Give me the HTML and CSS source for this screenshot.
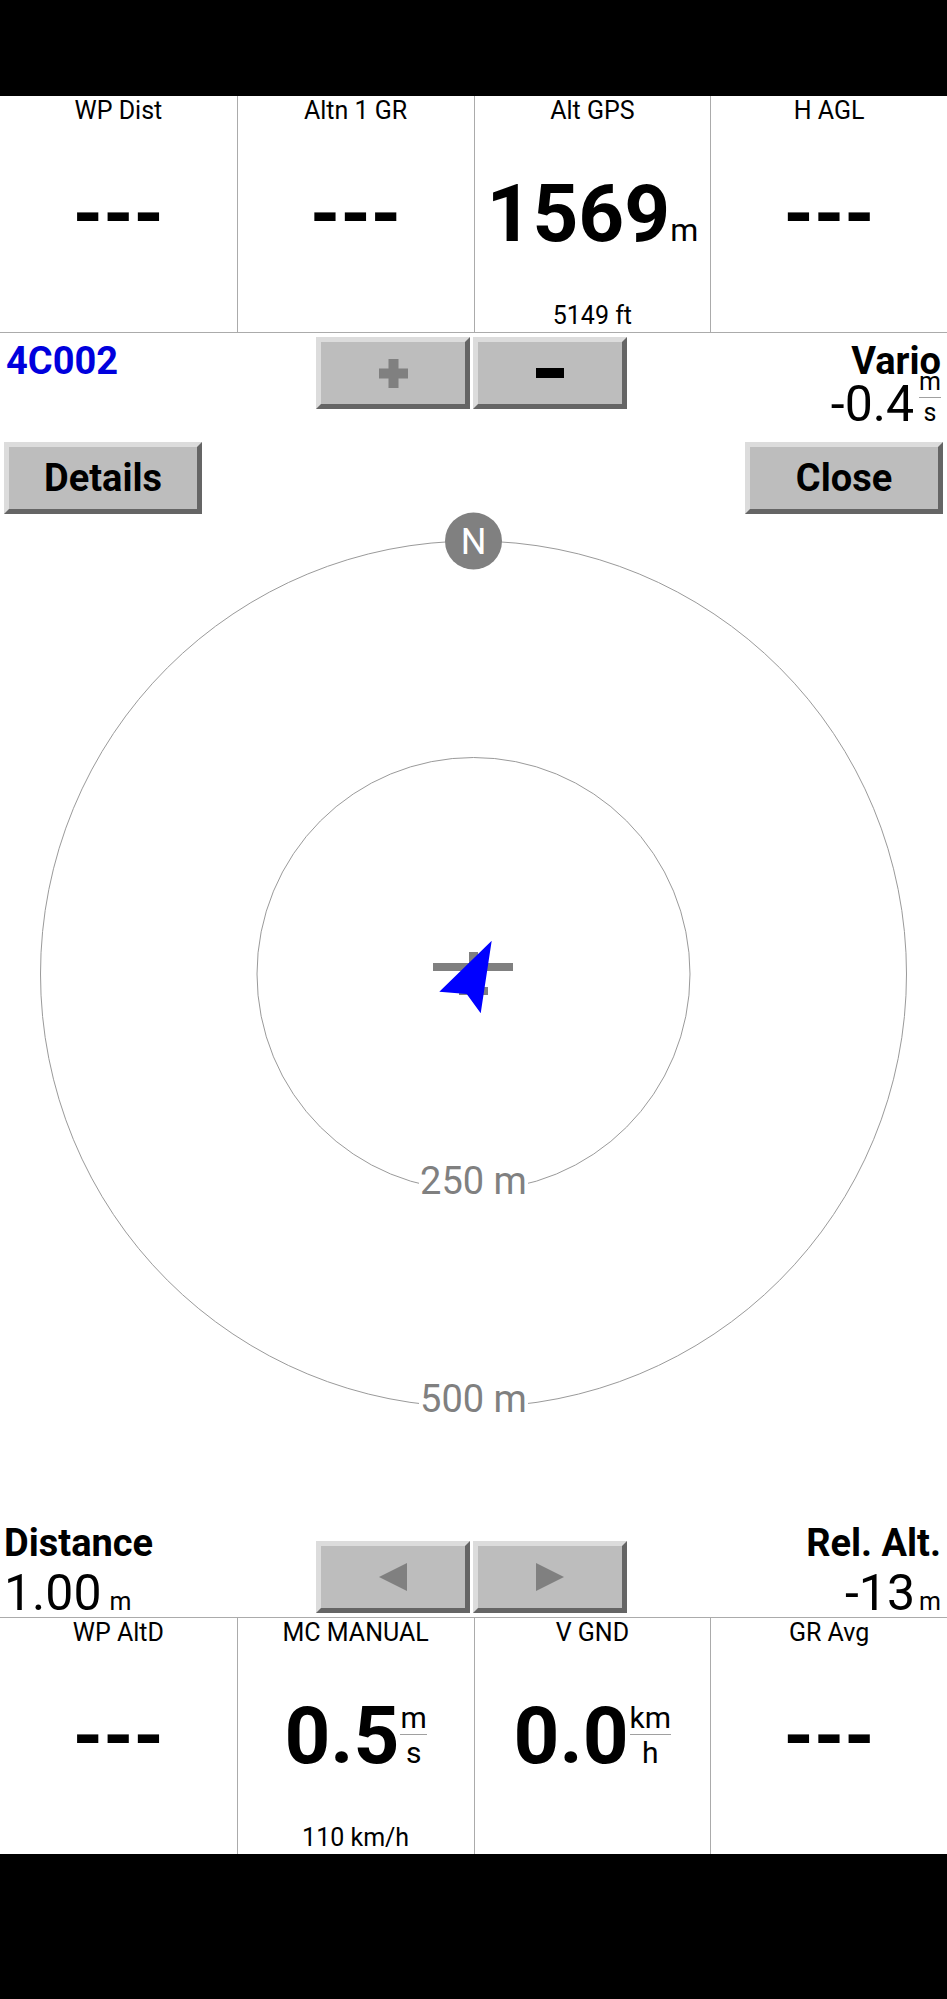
FILE: index.html
```html
<!DOCTYPE html>
<html lang="en">
<head>
<meta charset="utf-8">
<title>FLARM Traffic</title>
<link rel="stylesheet" href="styles.css">
</head>
<body>
<div class="screen">
  <div class="bar-top"></div>

  <div class="infobar upper">
    <div class="ibox">
      <div class="ib-title">WP Dist</div>
      <div class="ib-value"><div class="val"><span class="dash">---</span></div></div>
      <div class="ib-comment"></div>
    </div>
    <div class="ibox">
      <div class="ib-title">Altn 1 GR</div>
      <div class="ib-value"><div class="val"><span class="dash">---</span></div></div>
      <div class="ib-comment"></div>
    </div>
    <div class="ibox">
      <div class="ib-title">Alt GPS</div>
      <div class="ib-value"><div class="val">1569<span class="unit">m</span></div></div>
      <div class="ib-comment">5149 ft</div>
    </div>
    <div class="ibox">
      <div class="ib-title">H AGL</div>
      <div class="ib-value"><div class="val"><span class="dash">---</span></div></div>
      <div class="ib-comment"></div>
    </div>
  </div>

  <div class="radar">
    <svg class="radar-canvas" viewBox="0 0 947 1284" width="947" height="1284">
      <circle cx="473.5" cy="641" r="433" fill="none" stroke="#9a9a9a" stroke-width="1"/>
      <circle cx="473.5" cy="641" r="216.5" fill="none" stroke="#9a9a9a" stroke-width="1"/>
      <rect x="419" y="830" width="109" height="36" fill="#fff"/>
      <text x="473.5" y="861" text-anchor="middle" class="rlabel">250 m</text>
      <rect x="419" y="1048" width="109" height="36" fill="#fff"/>
      <text x="473.5" y="1079" text-anchor="middle" class="rlabel">500 m</text>
      <circle cx="473.5" cy="208" r="28.5" fill="#808080"/>
      <text x="473.5" y="221" text-anchor="middle" class="nlabel">N</text>
      <rect x="433" y="630" width="80" height="8" fill="#808080"/>
      <rect x="469" y="619" width="9" height="43" fill="#808080"/>
      <rect x="459" y="654" width="29" height="8" fill="#808080"/>
      <polygon points="491.7,607.7 439.3,658.7 466.7,661 480.7,680.3" fill="#0000ff"/>
    </svg>

    <div class="radar-top">
      <div class="row1">
        <div class="target">4C002</div>
        <div class="btn-pair">
          <div class="btn sq">
            <svg width="29" height="29" viewBox="0 0 29 29"><rect x="9.5" y="0" width="10" height="29" fill="#808080"/><rect x="0" y="9.5" width="29" height="10" fill="#808080"/></svg>
          </div>
          <div class="btn sq">
            <svg width="28" height="10" viewBox="0 0 28 10"><rect x="0" y="0" width="28" height="10" fill="#000"/></svg>
          </div>
        </div>
        <div class="readout right">
          <div class="ro-label">Vario</div>
          <div class="ro-value">-0.4<span class="frac sm"><span class="num">m</span><span class="den">s</span></span></div>
        </div>
      </div>
      <div class="row2">
        <div class="btn wide">Details</div>
        <div class="btn wide">Close</div>
      </div>
    </div>

    <div class="radar-bottom">
      <div class="readout left">
        <div class="ro-label">Distance</div>
        <div class="ro-value low">1.00<span class="ro-unit wide-gap">m</span></div>
      </div>
      <div class="btn-pair arrows">
        <div class="btn sq">
          <svg width="28" height="28" viewBox="0 0 28 28"><polygon points="0,14 28,0 28,28" fill="#808080"/></svg>
        </div>
        <div class="btn sq">
          <svg width="28" height="28" viewBox="0 0 28 28"><polygon points="28,14 0,0 0,28" fill="#808080"/></svg>
        </div>
      </div>
      <div class="readout right">
        <div class="ro-label">Rel. Alt.</div>
        <div class="ro-value low">-13<span class="ro-unit">m</span></div>
      </div>
    </div>
  </div>

  <div class="infobar lower">
    <div class="ibox">
      <div class="ib-title">WP AltD</div>
      <div class="ib-value"><div class="val"><span class="dash">---</span></div></div>
      <div class="ib-comment"></div>
    </div>
    <div class="ibox">
      <div class="ib-title">MC MANUAL</div>
      <div class="ib-value"><div class="val">0.5<span class="frac"><span class="num">m</span><span class="den">s</span></span></div></div>
      <div class="ib-comment">110 km/h</div>
    </div>
    <div class="ibox">
      <div class="ib-title">V GND</div>
      <div class="ib-value"><div class="val">0.0<span class="frac"><span class="num">km</span><span class="den">h</span></span></div></div>
      <div class="ib-comment"></div>
    </div>
    <div class="ibox">
      <div class="ib-title">GR Avg</div>
      <div class="ib-value"><div class="val"><span class="dash">---</span></div></div>
      <div class="ib-comment"></div>
    </div>
  </div>

  <div class="bar-bottom"></div>
</div>
</body>
</html>
```

FILE: styles.css
```css
* {
  box-sizing: border-box;
  margin: 0;
  padding: 0;
}

html,
body {
  background: #000;
}

body {
  width: 947px;
  height: 1999px;
  overflow: hidden;
  font-family: Roboto, "Liberation Sans", sans-serif;
  color: #000;
}

.screen {
  width: 947px;
}

.bar-top {
  height: 96px;
  background: #000;
}

.bar-bottom {
  height: 145px;
  background: #000;
}

/* ---------- info boxes ---------- */
.infobar {
  display: grid;
  grid-template-columns: repeat(4, 1fr);
  height: 237px;
  background: #fff;
}

.infobar.upper {
  border-bottom: 1px solid #ababab;
}

.infobar.lower {
  border-top: 1px solid #ababab;
}

.ibox {
  display: flex;
  flex-direction: column;
  border-left: 1px solid #ababab;
  min-width: 0;
}

.ibox:first-child {
  border-left: 0;
}

.ib-title {
  padding-top: 1px;
  font-size: 25px;
  line-height: 28px;
  text-align: center;
  white-space: nowrap;
}

.ib-value {
  flex: 1;
  display: flex;
  align-items: center;
  justify-content: center;
}

.val {
  font-size: 80px;
  font-weight: 700;
  line-height: 1;
  white-space: nowrap;
}

.dash {
  font-size: 77px;
  font-weight: 700;
  line-height: 1;
}

.unit {
  font-size: 32px;
  font-weight: 400;
  line-height: 1;
}

.frac {
  display: inline-block;
  font-size: 30px;
  font-weight: 400;
  text-align: center;
  margin-left: 1px;
}

.frac .num,
.frac .den {
  display: block;
}

.frac .num {
  line-height: 33px;
  border-bottom: 1px solid #a0a0a0;
}

.frac .den {
  line-height: 36px;
}

.frac.sm {
  font-size: 25px;
  margin-left: 5px;
  margin-top: -15px;
}

.frac.sm .num,
.frac.sm .den {
  line-height: 30px;
}

.ib-comment {
  height: 30px;
  font-size: 25px;
  line-height: 28px;
  text-align: center;
  white-space: nowrap;
}

/* ---------- radar ---------- */
.radar {
  position: relative;
  height: 1284px;
  background: #fff;
  display: flex;
  flex-direction: column;
  justify-content: space-between;
}

.radar-canvas {
  position: absolute;
  left: 0;
  top: 0;
  display: block;
}

.rlabel {
  font-family: Roboto, "Liberation Sans", sans-serif;
  font-size: 38px;
  fill: #808080;
}

.nlabel {
  font-family: Roboto, "Liberation Sans", sans-serif;
  font-size: 36px;
  fill: #fff;
}

.radar-top,
.radar-bottom {
  position: relative;
}

.row1 {
  display: grid;
  grid-template-columns: 316px 311px 1fr;
  height: 76px;
  padding-top: 4px;
  align-items: start;
}

.target {
  padding: 5px 0 0 6px;
  font-size: 38px;
  font-weight: 700;
  line-height: 38px;
  color: #0000dd;
  white-space: nowrap;
}

.btn-pair {
  display: flex;
  gap: 3px;
}

.btn {
  display: flex;
  align-items: center;
  justify-content: center;
  background: #bdbdbd;
  border: 5px solid;
  border-color: #dcdcdc #656565 #656565 #dcdcdc;
  font-size: 38px;
  font-weight: 700;
  line-height: 1;
  color: #000;
}

.btn.sq {
  width: 154px;
  height: 72px;
}

.btn.wide {
  width: 198px;
  height: 72px;
}

.row2 {
  display: flex;
  justify-content: space-between;
  padding: 0 4px;
  margin-top: 33px;
}

.readout.right {
  text-align: right;
  padding: 5px 6px 0 0;
}

.readout.left {
  padding-left: 4px;
}

.ro-label {
  font-size: 38px;
  font-weight: 700;
  line-height: 38px;
  white-space: nowrap;
}

.ro-value {
  font-size: 50px;
  font-weight: 400;
  line-height: 47px;
  margin-top: 1px;
  white-space: nowrap;
}

.ro-value.low {
  margin-top: 8px;
}

.ro-unit {
  font-size: 25px;
  line-height: 1;
  margin-left: 4px;
}

.ro-unit.wide-gap {
  margin-left: 8px;
}

.radar-bottom {
  display: grid;
  grid-template-columns: 316px 311px 1fr;
  align-items: end;
}

.radar-bottom .readout.right {
  padding-top: 0;
}

.btn-pair.arrows {
  margin-bottom: 4px;
}
```
